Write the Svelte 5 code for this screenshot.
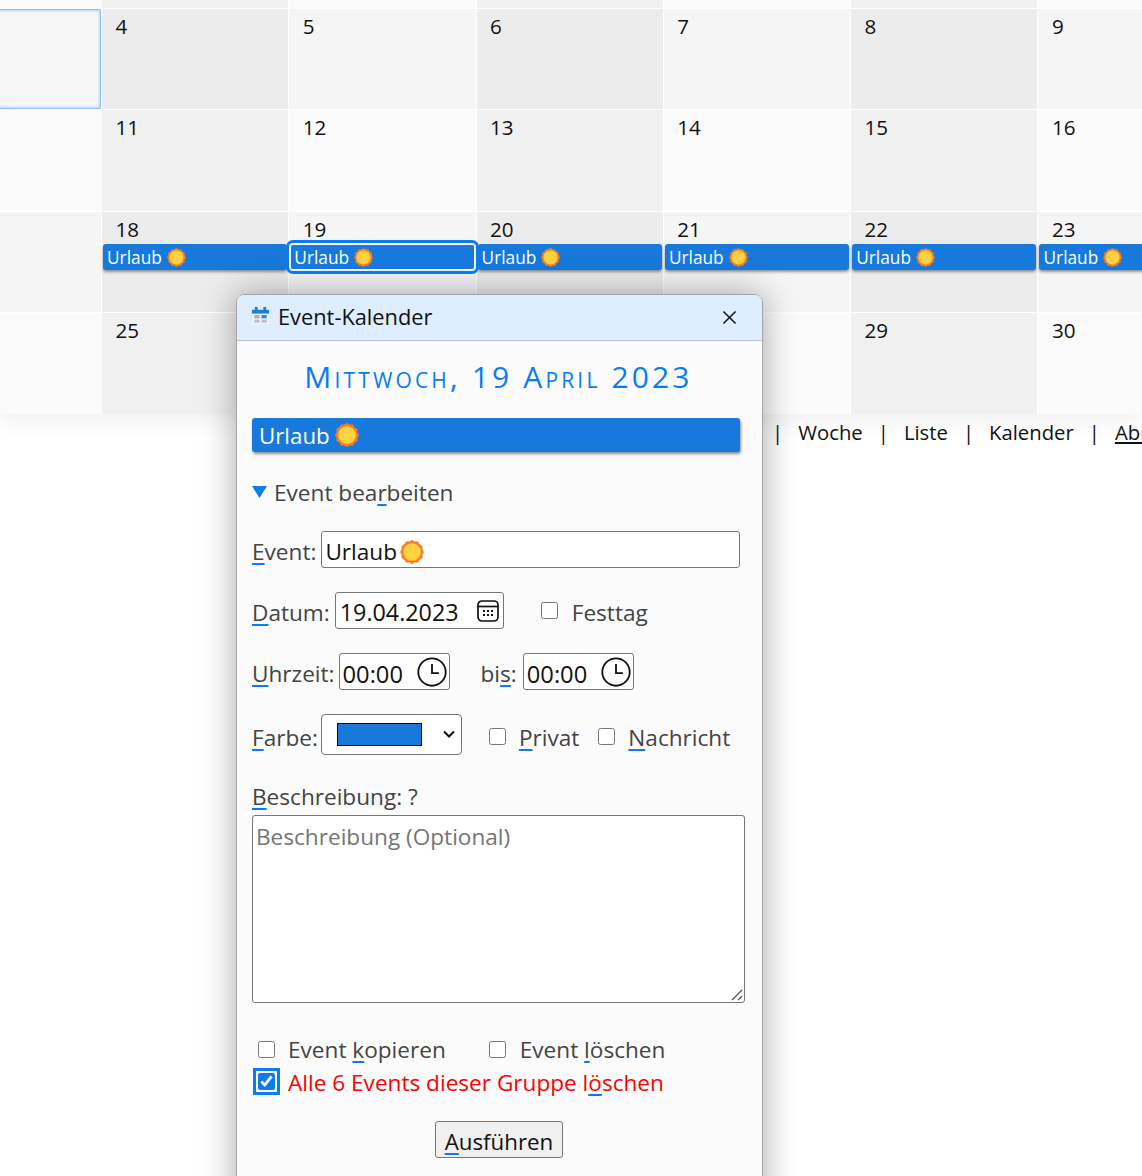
<script lang="ts">
	const weeks = [
		['', '', '', '', '', '', ''],
		['', '4', '5', '6', '7', '8', '9'],
		['', '11', '12', '13', '14', '15', '16'],
		['', '18', '19', '20', '21', '22', '23'],
		['', '25', '26', '27', '28', '29', '30']
	];
	const eventWeek = 3;
	const selectedDay = '19';

	function shade(row: number, col: number) {
		const dark = row % 2 === 1;
		const odd = col % 2 === 1;
		if (dark) return odd ? 'c-dark' : 'c-mid';
		return odd ? 'c-soft' : 'c-light';
	}

	// scalloped outline of the little sun emoji
	const sunPoints = Array.from({ length: 24 }, (_, i) => {
		const r = i % 2 === 0 ? 12 : 10.8;
		const a = (i / 24) * Math.PI * 2;
		return `${(12 + r * Math.cos(a)).toFixed(2)},${(12 + r * Math.sin(a)).toFixed(2)}`;
	}).join(' ');
</script>

{#snippet sun(cls = '')}
	<svg class="sun {cls}" viewBox="0 0 24 24" aria-hidden="true">
		<polygon points={sunPoints} fill="#f97b24" />
		<circle cx="12" cy="12" r="8.8" fill="#ffd23f" />
	</svg>
{/snippet}

<div class="page">
	<div class="calendar">
		{#each weeks as week, r}
			{#each week as day, c}
				<div class="cell {shade(r, c)}" class:focused={r === 1 && c === 0}>
					{#if day}
						<span class="num">{day}</span>
					{/if}
					{#if r === eventWeek && c > 0}
						<button type="button" class="event" class:selected={day === selectedDay}>
							Urlaub {@render sun()}
						</button>
					{/if}
				</div>
			{/each}
		{/each}
	</div>

	<nav class="nav">
		<span>Neu</span><i>|</i><span>Woche</span><i>|</i><span>Liste</span><i>|</i><span>Kalender</span><i>|</i><a href="#top">Abruf</a>
	</nav>

	<div class="dialog" role="dialog" aria-label="Event-Kalender">
		<header class="head">
			<svg class="cal-icon" viewBox="0 0 20 20" aria-hidden="true">
				<rect x="1" y="4" width="18" height="15" fill="#f1f1f6" />
				<rect x="1" y="4" width="18" height="4" fill="#1c7fd8" />
				<rect x="4" y="1" width="3" height="5" fill="#1c7fd8" />
				<rect x="13" y="1" width="3" height="5" fill="#1c7fd8" />
				<rect x="3.5" y="9.5" width="5.5" height="3.5" fill="#a9a9c4" />
				<rect x="11" y="9.5" width="5.5" height="3.5" fill="#2a8ae0" />
				<rect x="3.5" y="14.5" width="5.5" height="3" fill="#b9b9d0" />
				<rect x="11" y="14.5" width="5.5" height="3" fill="#b9b9d0" />
			</svg>
			<span class="head-title">Event-Kalender</span>
			<svg class="close" viewBox="0 0 16 16" aria-label="Schließen">
				<path d="M1.5 1.5 14.5 14.5M14.5 1.5 1.5 14.5" stroke="#111" stroke-width="1.6" fill="none" />
			</svg>
		</header>

		<div class="body">
			<h1 class="date">Mittwoch, 19 April 2023</h1>
			<div class="bar">Urlaub {@render sun('sun-lg')}</div>

			<div class="summary">
				<svg class="tri" viewBox="0 0 15 12" aria-hidden="true"><path d="M0 0H15L7.5 12Z" fill="#0a7cf0" /></svg>
				<span class="summary-text">Event bea<u>r</u>beiten</span>
			</div>

			<div class="row row-event">
				<label for="ev"><u>E</u>vent:</label>
				<div class="field grow">
					<input id="ev" value="Urlaub" />
					{@render sun('sun-lg sun-field')}
				</div>
			</div>

			<div class="row">
				<label for="dt"><u>D</u>atum:</label>
				<div class="field f-date">
					<input id="dt" value="19.04.2023" />
					<svg class="pick" viewBox="0 0 22 22" aria-hidden="true">
						<rect x="1" y="1" width="20" height="20" rx="4" fill="none" stroke="#111" stroke-width="1.7" />
						<path d="M1 6.5H21" stroke="#111" stroke-width="1.7" />
						<path d="M6 11h2M10 11h2M14 11h2M6 15h2M10 15h2M14 15h2" stroke="#111" stroke-width="1.8" />
					</svg>
				</div>
				<input class="check c-fest" type="checkbox" id="fest" />
				<label for="fest">Festtag</label>
			</div>

			<div class="row">
				<label for="t1"><u>U</u>hrzeit:</label>
				<div class="field f-time">
					<input id="t1" value="00:00" />
					<svg class="clock" viewBox="0 0 28 28" aria-hidden="true">
						<circle cx="14" cy="14" r="12.8" fill="none" stroke="#111" stroke-width="1.7" />
						<path d="M14 6.5V15H20.5" fill="none" stroke="#111" stroke-width="1.7" />
					</svg>
				</div>
				<label class="l-bis" for="t2">bi<u>s</u>:</label>
				<div class="field f-time">
					<input id="t2" value="00:00" />
					<svg class="clock" viewBox="0 0 28 28" aria-hidden="true">
						<circle cx="14" cy="14" r="12.8" fill="none" stroke="#111" stroke-width="1.7" />
						<path d="M14 6.5V15H20.5" fill="none" stroke="#111" stroke-width="1.7" />
					</svg>
				</div>
			</div>

			<div class="row row-color">
				<span class="lab"><u>F</u>arbe:</span>
				<div class="color-select">
					<span class="swatch"></span>
					<svg class="chev" viewBox="0 0 12 8" aria-hidden="true"><path d="M1 1.5 6 6.5 11 1.5" fill="none" stroke="#111" stroke-width="2" /></svg>
				</div>
				<input class="check c-privat" type="checkbox" id="pr" />
				<label for="pr"><u>P</u>rivat</label>
				<input class="check c-nach" type="checkbox" id="na" />
				<label for="na"><u>N</u>achricht</label>
			</div>

			<label class="desc-label" for="desc"><u>B</u>eschreibung: ?</label>
			<div class="desc-wrap">
				<textarea id="desc" placeholder="Beschreibung (Optional)"></textarea>
				<svg class="grip" viewBox="0 0 12 12" aria-hidden="true">
					<path d="M1 11 11 1M7 11 11 7" stroke="#555" stroke-width="1.3" fill="none" />
				</svg>
			</div>

			<div class="row row-opts">
				<input class="check c-copy" type="checkbox" id="cp" />
				<label for="cp">Event <u>k</u>opieren</label>
				<input class="check c-del" type="checkbox" id="dl" />
				<label for="dl">Event <u>l</u>öschen</label>
			</div>
			<div class="row row-all">
				<input class="check c-all" type="checkbox" id="al" checked />
				<label class="red" for="al">Alle 6 Events dieser Gruppe l<u>ö</u>schen</label>
			</div>

			<div class="actions">
				<button type="button" class="run"><u>A</u>usführen</button>
			</div>
		</div>
	</div>
</div>

<style>
	:global(body) {
		background: #fff;
		font-family: 'Open Sans', 'Noto Sans', sans-serif;
	}

	.page {
		height: 100vh;
		overflow: hidden;
		position: relative;
	}

	.calendar {
		background: #fff;
		box-shadow: 0 8px 20px rgb(0 0 0 / 6%);
		display: grid;
		gap: 1px;
		grid-template-columns: 101px repeat(6, 186.3px);
		grid-template-rows: 8px 100px 101px 100px 101px;
		overflow: hidden;
		width: 1142px;
	}

	.cell {
		min-width: 0;
		position: relative;
	}

	.c-dark { background: #ececec; }
	.c-mid { background: #f5f5f5; }
	.c-soft { background: #f0f0f0; }
	.c-light { background: #fbfbfb; }

	.focused {
		background: #f7f7f7;
		border-radius: 0 2px 2px 0;
		box-shadow: inset 0 0 0 1px #8cc0f7, inset 0 0 3px 2px #b5d6fa;
		margin-left: -4px;
	}

	.num {
		color: #111;
		display: block;
		font-size: 20.6px;
		line-height: 24px;
		padding: 5px 0 0 13.4px;
	}

	.event {
		align-items: center;
		background: #1679db;
		border: 0;
		border-radius: 3px;
		box-shadow: 0 2px 3px rgb(0 0 0 / 40%);
		color: #fff;
		display: flex;
		font: inherit;
		font-size: 17.3px;
		gap: 5px;
		height: 26px;
		margin: 3px 1px 0;
		padding: 1px 0 0 4px;
		width: calc(100% - 2px);
	}

	.event.selected {
		box-shadow: inset 0 0 0 1px #fff;
		outline: 3px solid #0a7cf0;
		outline-offset: 1px;
		position: relative;
		z-index: 1;
	}

	.sun {
		flex: none;
		height: 19px;
		width: 19px;
	}

	.sun-lg {
		height: 24px;
		width: 24px;
	}

	.sun-field {
		margin-top: 4px;
	}

	.nav {
		align-items: center;
		color: #111;
		display: flex;
		font-size: 20.3px;
		gap: 15px;
		padding-left: 718px;
		position: relative;
		top: 4px;
		white-space: nowrap;
	}

	.nav i {
		font-style: normal;
	}

	.nav a {
		color: #111;
	}

	.dialog {
		background: rgb(251 251 251 / 98%);
		border: 1px solid #a5a5a5;
		border-radius: 8px 8px 0 0;
		box-shadow: 0 0 34px rgb(0 0 0 / 35%);
		box-sizing: border-box;
		color: #444;
		font-size: 22.6px;
		height: 960px;
		left: 236px;
		position: absolute;
		top: 294px;
		width: 527px;
	}

	.head {
		align-items: center;
		background: #deedff;
		border-bottom: 1px solid #b6c3d3;
		border-radius: 7px 7px 0 0;
		color: #111;
		display: flex;
		font-size: 21.8px;
		height: 45px;
		padding: 0 25px 0 15px;
	}

	.cal-icon {
		height: 19px;
		margin: -5px 8px 0 -1px;
		width: 19px;
	}

	.head-title {
		flex: 1;
		margin-top: -2px;
	}

	.close {
		height: 15px;
		width: 15px;
	}

	.body {
		padding: 0 17px 0 15px;
	}

	.date {
		color: #0a7cf0;
		font-size: 30px;
		font-variant: small-caps;
		font-weight: 400;
		letter-spacing: 3.15px;
		line-height: 40px;
		margin: 16px 0 21px;
		text-align: center;
	}

	.bar {
		align-items: center;
		background: #1679db;
		border-radius: 3px;
		box-shadow: 1px 2px 3px rgb(0 0 0 / 45%);
		box-sizing: border-box;
		color: #fff;
		display: flex;
		font-size: 22.3px;
		gap: 5px;
		height: 34px;
		padding-left: 7px;
		width: 488px;
	}

	.summary {
		align-items: center;
		display: flex;
		gap: 7px;
		height: 30px;
		line-height: 30px;
		margin-top: 25px;
	}

	.summary-text {
		margin-top: 1px;
	}

	.tri {
		height: 12px;
		width: 15px;
	}

	u {
		text-decoration-color: #0a7cf0;
		text-decoration-thickness: 2px;
		text-underline-offset: 3px;
	}

	.row {
		align-items: center;
		display: flex;
		margin-top: 24px;
		min-height: 37px;
	}

	.row-event {
		width: 488px;
	}

	.row label,
	.lab {
		padding-top: 4px;
		white-space: nowrap;
	}

	.row-color label,
	.row-color .lab {
		padding-top: 6px;
	}

	.field {
		align-items: center;
		background: #fff;
		border: 1px solid #767676;
		border-radius: 3px;
		box-sizing: border-box;
		display: flex;
		height: 37px;
		margin-left: 5px;
	}

	.grow {
		flex: 1;
	}

	.field input {
		background: transparent;
		border: 0;
		color: #111;
		font: inherit;
		min-width: 0;
		outline: 0;
		padding: 4px 0 0 4px;
		width: 100%;
	}

	.field #ev {
		flex: none;
		padding-left: 3px;
		width: 75px;
	}

	.f-date {
		padding-right: 4px;
		width: 169px;
	}

	.f-date input {
		font-size: 23.3px;
		padding-top: 2px;
	}

	.f-time {
		margin-left: 4px;
		padding-right: 2px;
		width: 111px;
	}

	.f-time input {
		font-size: 23.7px;
		padding-left: 3px;
	}

	.pick {
		flex: none;
		height: 22px;
		width: 22px;
	}

	.clock {
		flex: none;
		height: 30px;
		width: 30px;
	}

	.row .l-bis {
		margin: 0 2px 0 31px;
	}

	.color-select {
		align-items: center;
		background: #fff;
		border: 1px solid #767676;
		border-radius: 4px;
		box-sizing: border-box;
		display: flex;
		height: 41px;
		justify-content: space-between;
		margin-left: 3px;
		padding: 0 6px 0 15px;
		width: 141px;
	}

	.swatch {
		background: #1679db;
		border: 1px solid #000;
		box-sizing: border-box;
		height: 23px;
		width: 85px;
	}

	.chev {
		height: 8px;
		margin-top: -2px;
		width: 12px;
	}

	.check {
		accent-color: #0a7cf0;
		flex: none;
		height: 17px;
		margin: 0;
		width: 17px;
	}

	.c-fest { margin: 0 14px 0 37px; }
	.c-privat { margin: 4px 13px 0 27px; }
	.c-nach { margin: 4px 13px 0 19px; }
	.c-copy { margin: 0 13px 0 6px; }
	.c-del { margin: 0 14px 0 43px; }

	.c-all {
		margin: -2px 13px 0 6px;
		outline: 3px solid #0a7cf0;
		outline-offset: 2px;
	}

	.desc-label {
		display: block;
		line-height: 30px;
		margin-top: 27px;
	}

	.desc-wrap {
		margin-top: 3px;
		position: relative;
		width: 493px;
	}

	textarea {
		background: #fff;
		border: 1px solid #767676;
		border-radius: 3px;
		box-sizing: border-box;
		color: #111;
		display: block;
		font: inherit;
		height: 188px;
		padding: 5px 3px;
		resize: none;
		width: 100%;
	}

	textarea::placeholder {
		color: #757575;
	}

	.grip {
		bottom: 2px;
		height: 12px;
		position: absolute;
		right: 2px;
		width: 12px;
	}

	.row-opts {
		margin-top: 30px;
		min-height: 32px;
	}

	.row-opts label,
	.row-all label {
		padding-top: 0;
	}

	.row-all {
		margin-top: 1px;
		min-height: 32px;
	}

	.red {
		color: #f00;
	}

	.actions {
		display: flex;
		justify-content: center;
		margin-top: 23px;
	}

	.run {
		background: #f0f0f0;
		border: 1px solid #767676;
		border-radius: 3px;
		color: #111;
		font: inherit;
		font-size: 22.3px;
		height: 37px;
		padding: 4px 0 0 1px;
		width: 128px;
	}
</style>
